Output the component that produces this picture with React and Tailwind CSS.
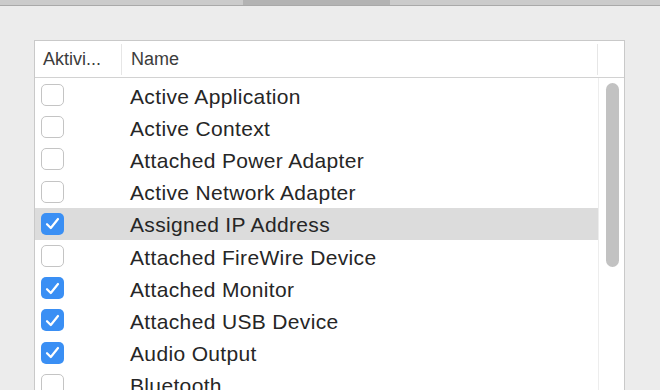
import React from "react";

const rows = [
  { name: "Active Application", on: false },
  { name: "Active Context", on: false },
  { name: "Attached Power Adapter", on: false },
  { name: "Active Network Adapter", on: false },
  { name: "Assigned IP Address", on: true, selected: true },
  { name: "Attached FireWire Device", on: false },
  { name: "Attached Monitor", on: true },
  { name: "Attached USB Device", on: true },
  { name: "Audio Output", on: true },
  { name: "Bluetooth", on: false },
];

const Checkbox = ({ checked }) =>
  checked ? (
    <div className="w-[23px] h-[22px] rounded-[5px] bg-[#3a8ff4] flex items-center justify-center">
      <svg width="15" height="13" viewBox="0 0 15 13" fill="none">
        <path
          d="M2 7.2L5.8 11L13 2"
          stroke="white"
          strokeWidth="2.2"
          strokeLinecap="round"
          strokeLinejoin="round"
        />
      </svg>
    </div>
  ) : (
    <div className="w-[23px] h-[22px] rounded-[5px] bg-white border border-[#c4c4c4]" />
  );

export default function App() {
  return (
    <div
      className="w-[660px] h-[390px] overflow-hidden bg-[#ececec] text-[#262626]"
      style={{ fontFamily: '"Liberation Sans", Arial, sans-serif' }}
    >
      {/* top toolbar strip */}
      <div className="h-[6px] flex bg-[#cbcbcb] border-b border-[#a9a9a9]">
        <div className="w-[243px]" />
        <div className="w-[147px] bg-[#b3b3b3]" />
        <div className="flex-1" />
      </div>

      <div className="pl-[34px] pt-[34px]">
        <div className="w-[591px] h-[400px] bg-white border border-[#c9c9c9] flex flex-col">
          {/* header */}
          <div className="h-[37px] flex items-center border-b border-[#d2d2d2] text-[18px] text-[#3c3c3c] shrink-0">
            <div className="w-[87px] h-[31px] flex items-center pl-[8px] border-r border-[#e6e6e6]">
              Aktivi...
            </div>
            <div className="flex-1 pl-[9px]">Name</div>
            <div className="w-[27px] h-[31px] border-l border-[#e6e6e6]" />
          </div>

          {/* body */}
          <div className="flex flex-1">
            <div className="flex-1 pt-[1px]">
              {rows.map((r) => (
                <div
                  key={r.name}
                  className={`h-[32.2px] flex items-center ${
                    r.selected ? "bg-[#dcdcdc]" : ""
                  }`}
                >
                  <div className="w-[94px] pl-[6px] flex items-center">
                    <Checkbox checked={r.on} />
                  </div>
                  <div className="text-[21px] tracking-[0.35px] leading-none pt-[2px] pl-[1px]">
                    {r.name}
                  </div>
                </div>
              ))}
            </div>
            <div className="w-[26px] border-l border-[#ededed] pt-[5px] pl-[7px]">
              <div className="w-[13px] h-[184px] rounded-full bg-[#c2c2c2]" />
            </div>
          </div>
        </div>
      </div>
    </div>
  );
}
